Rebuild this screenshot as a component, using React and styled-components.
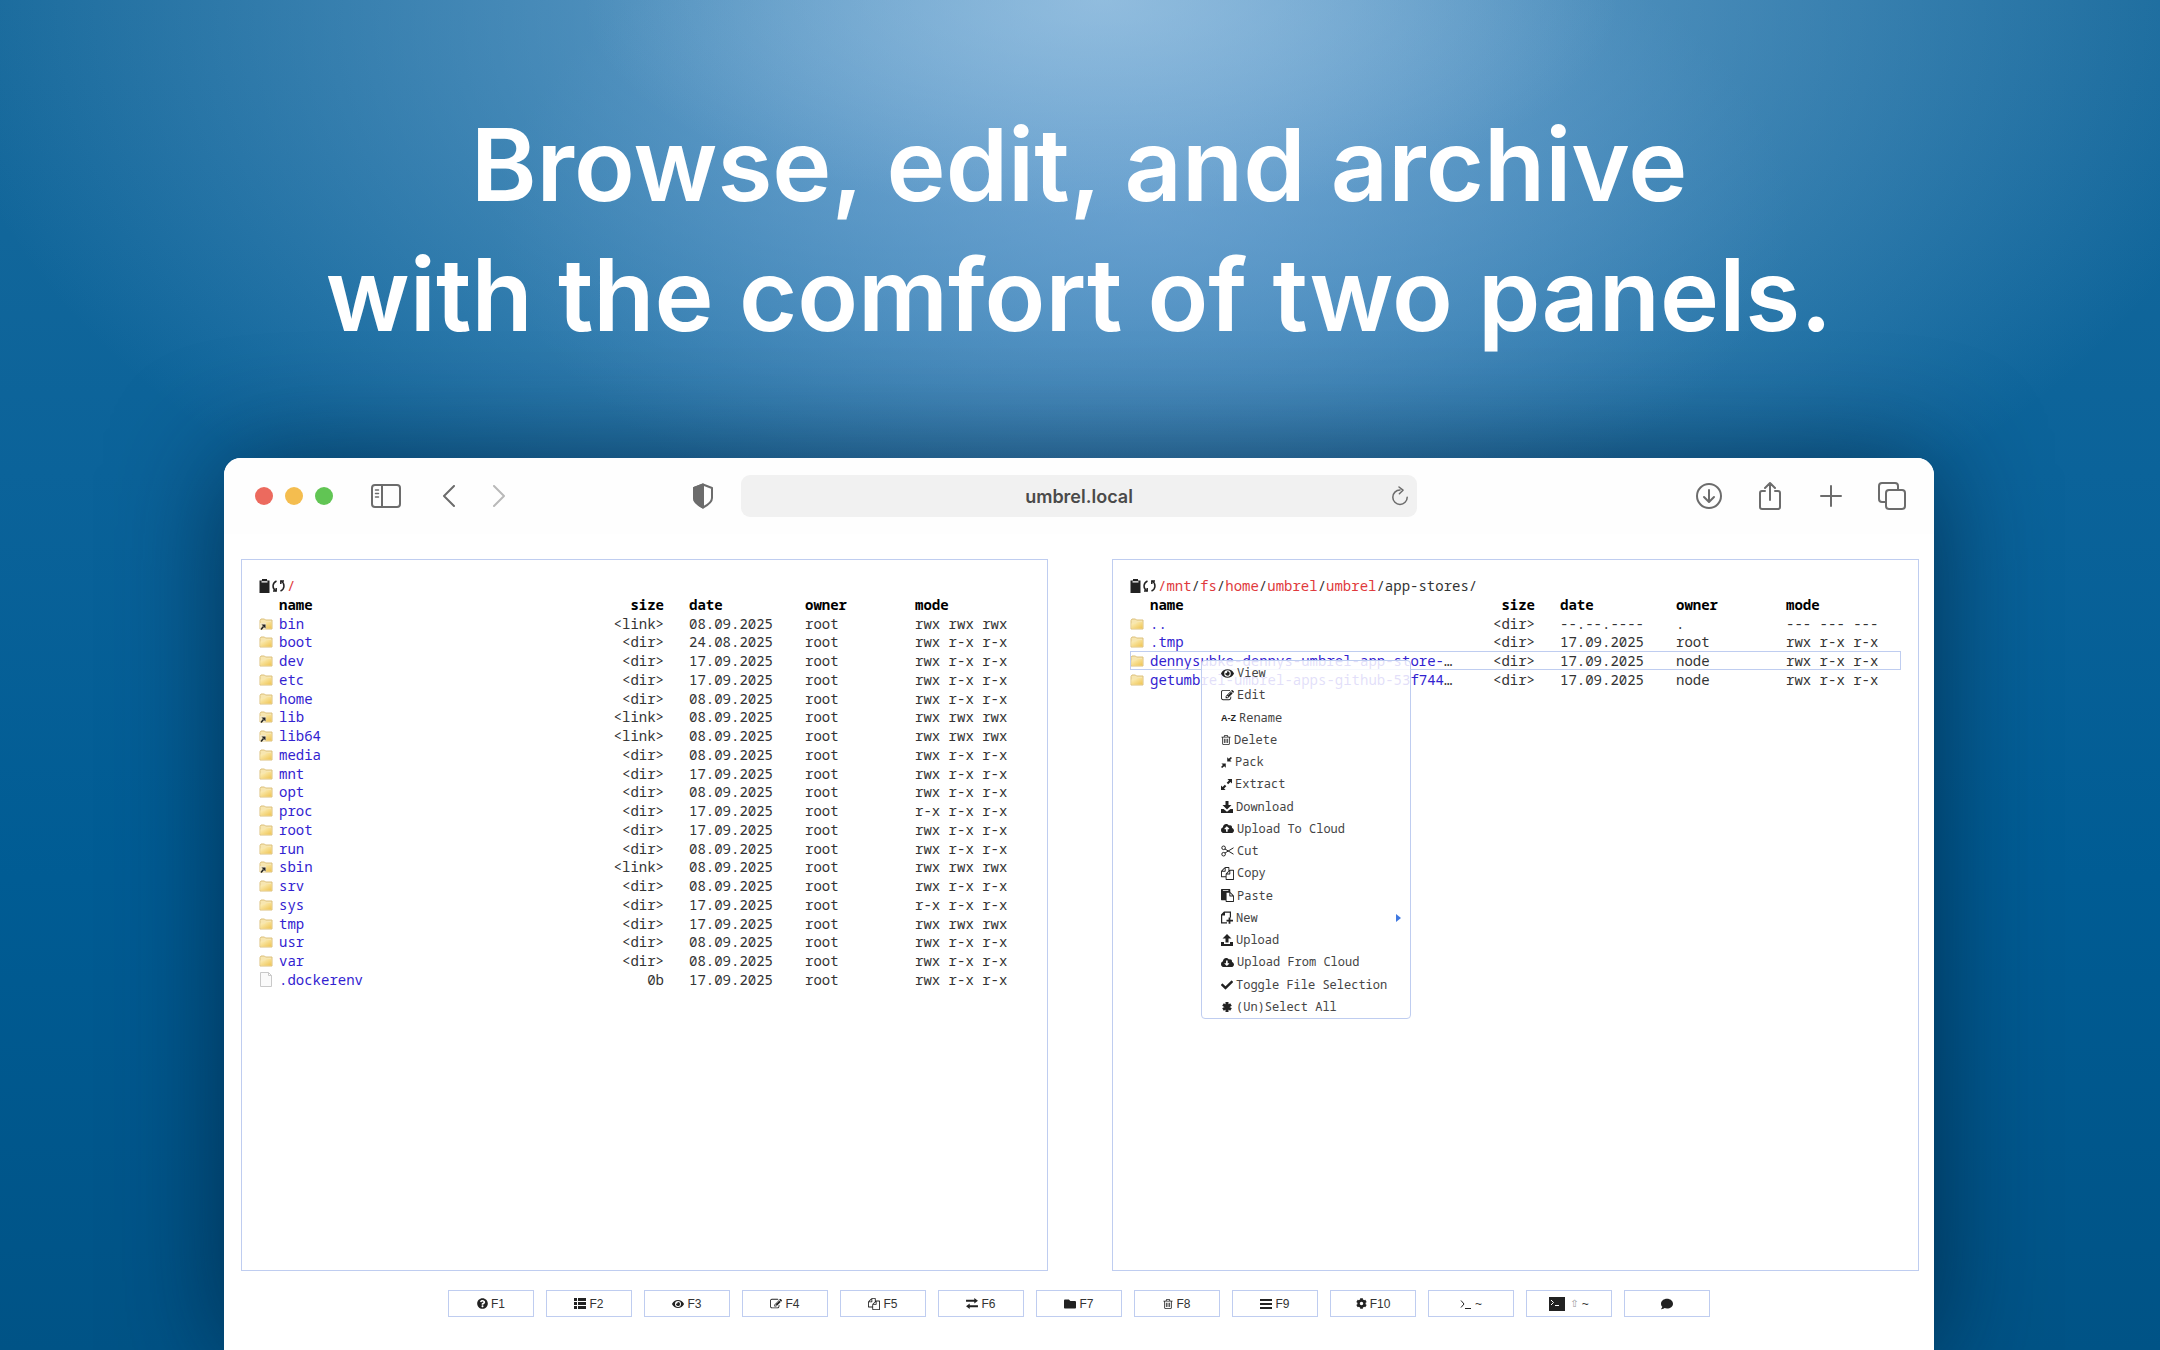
import React from "react";
import styled, { createGlobalStyle } from "styled-components";
import {
  FaEye, FaCloudUploadAlt, FaCloudDownloadAlt, FaCheck,
  FaQuestionCircle, FaFolder, FaCog, FaComment,
} from "react-icons/fa";

const MONO = `"Droid Sans Mono", "Noto Sans Mono", "DejaVu Sans Mono", monospace`;
const LINE = "#bfcdf0";

const GlobalStyle = createGlobalStyle`
  * { box-sizing: border-box; }
  body { margin: 0; background: #00568a; }
  button, input { font: inherit; color: inherit; }
  a { color: inherit; text-decoration: none; }
`;

const Page = styled.div`
  min-height: 100vh;
  display: flex;
  flex-direction: column;
  padding: 100px 226px 0 224px;
  overflow: hidden;
  background:
    radial-gradient(ellipse 24% 16% at 51% 0%, rgba(170, 205, 230, 0.5), rgba(150, 190, 225, 0) 100%),
    radial-gradient(ellipse 54% 50% at 51% 0%, rgba(140, 186, 226, 0.8), rgba(90, 150, 200, 0) 100%),
    radial-gradient(ellipse 30% 26% at 53% 16%, rgba(100, 155, 212, 0.5), rgba(70, 135, 195, 0) 100%),
    linear-gradient(180deg, #17699b 0%, #0b639a 35%, #005c94 65%, #005386 100%);
`;

const Headline = styled.h1`
  margin: 0 0 98px;
  font: 600 100px/130px Inter, sans-serif;
  color: #fff;
  text-align: center;
  white-space: nowrap;
`;

const Window = styled.section`
  flex: 1;
  display: flex;
  flex-direction: column;
  border-radius: 17px 17px 0 0;
  background: #fff;
  box-shadow: 0 4px 110px rgba(0, 26, 48, 0.66);
`;

const Toolbar = styled.header`
  display: grid;
  grid-template-columns: 1fr 676px 1fr;
  align-items: center;
  height: 76px;
  border-radius: 17px 17px 0 0;
  background: #fefefe;
`;

const ToolSide = styled.div`
  display: flex;
  align-items: center;
  justify-content: ${(p) => (p.$end ? "flex-end" : "flex-start")};
  gap: ${(p) => (p.$end ? "31px" : "0")};
  padding: ${(p) => (p.$end ? "0 27px 0 0" : "0 23px 0 31px")};
`;

const Lights = styled.div`
  display: flex;
  gap: 12px;
  margin-right: 38px;
`;

const Light = styled.button`
  width: 18px;
  height: 18px;
  padding: 0;
  border: 0;
  border-radius: 50%;
  background: ${(p) => p.$color};
`;

const ToolButton = styled.button`
  display: flex;
  align-items: center;
  justify-content: center;
  width: 30px;
  height: 32px;
  padding: 0;
  border: 0;
  background: none;
  color: ${(p) => (p.$dim ? "#b9b9b9" : "#6c6c6c")};
  margin-right: ${(p) => p.$after || "0"};
  margin-left: ${(p) => (p.$push ? "auto" : "0")};

  svg {
    flex: none;
    fill: none;
    stroke: currentColor;
    stroke-width: 2;
    stroke-linecap: round;
    stroke-linejoin: round;
  }
`;

const Address = styled.div`
  position: relative;

  input {
    display: block;
    width: 100%;
    height: 42px;
    padding: 0 40px;
    border: 0;
    border-radius: 9px;
    background: #f1f1f1;
    color: #4a4a4a;
    font: 600 18px Inter, sans-serif;
    text-align: center;
  }

  button {
    position: absolute;
    top: 5px;
    right: 2px;
  }
`;

const Panels = styled.main`
  flex: 1;
  display: flex;
  gap: 64px;
  padding: 25px 15px 0 17px;
`;

const Panel = styled.section`
  position: relative;
  flex: 1;
  min-width: 0;
  padding: 17px;
  border: 1px solid ${LINE};
  color: #333;
  font: 14px/18px ${MONO};
`;

const PathBar = styled.div`
  display: flex;
  align-items: center;
  height: 18px;
  white-space: pre;

  a { color: #e0393c; }
`;

const PathButton = styled.button`
  display: flex;
  padding: 0;
  border: 0;
  background: none;
  color: #222;
  margin-right: 2px;
`;

const Files = styled.table`
  width: 100%;
  table-layout: fixed;
  border-collapse: collapse;

  th, td {
    height: 19px;
    padding: 0;
    text-align: left;
    white-space: nowrap;
    line-height: 18px;
  }
  th { color: #000; font-weight: 700; }
  tbody tr:nth-child(4n + 2) td { height: 18px; }
  th:nth-child(3), td:nth-child(3) { padding-right: 25px; text-align: right; }
  a { color: #3222d0; }
`;

const Row = styled.tr`
  outline: ${(p) => (p.$current ? `1px solid ${LINE}` : "none")};
  outline-offset: -1px;
`;

const Col = styled.col`
  width: ${(p) => p.$w};
`;

const IconCell = styled.td`
  svg { display: block; }
`;

const Menu = styled.ul`
  position: absolute;
  left: 88px;
  top: 100px;
  width: 210px;
  min-height: 359px;
  margin: 0;
  padding: 1px 0 0;
  display: grid;
  grid-auto-rows: 1fr;
  list-style: none;
  border: 1px solid ${LINE};
  border-radius: 4px;
  background: rgba(255, 255, 255, 0.86);
  font-size: 12px;
`;

const MenuItem = styled.li`
  display: flex;

  button {
    flex: 1;
    display: flex;
    align-items: center;
    gap: 3px;
    padding: 0 9px 0 19px;
    border: 0;
    background: none;
    color: #444;
    white-space: nowrap;
  }
  svg { flex: none; color: #222; }
`;

const Letters = styled.span`
  width: 15px;
  color: #222;
  font: 700 9px "Liberation Sans", sans-serif;
`;

const Arrow = styled.span`
  margin-left: auto;
  border: solid transparent;
  border-width: 4px 0 4px 5px;
  border-left-color: #3f78e0;
`;

const Keys = styled.nav`
  display: flex;
  justify-content: center;
  gap: 12px;
  padding: 19px 0 33px;
`;

const Key = styled.button`
  display: flex;
  align-items: center;
  justify-content: center;
  gap: 3px;
  width: 86px;
  height: 27px;
  padding: 0;
  border: 1px solid ${LINE};
  background: #fff;
  color: #333;
  font: 12px "Liberation Sans", sans-serif;

  svg { color: #222; }
`;

const Shift = styled.span`
  margin-left: 2px;
  color: #9a9a9a;
  font: 10px "DejaVu Sans", sans-serif;
`;

const Glyph = ({ d, w = 13, h = 13, box = "0 0 1792 1792" }) => (
  <svg width={w} height={h} viewBox={box} fill="currentColor" aria-hidden="true"><path d={d} /></svg>
);

const PATHS = {
  edit: "M888 1184l116-116-152-152-116 116v56h96v96h56zm440-720q-16-16-33 1l-350 350q-17 17-1 33t33-1l350-350q17-17 1-33zm80 594v190q0 119-84.5 203.5t-203.5 84.5h-832q-119 0-203.5-84.5t-84.5-203.5v-832q0-119 84.5-203.5t203.5-84.5h832q63 0 117 25 15 7 18 23 3 17-9 29l-49 49q-14 14-32 8-23-6-45-6h-832q-66 0-113 47t-47 113v832q0 66 47 113t113 47h832q66 0 113-47t47-113v-126q0-13 9-22l64-64q15-15 35-7t20 29zm-96-738l288 288-672 672h-288v-288zm444 132l-92 92-288-288 92-92q28-28 68-28t68 28l152 152q28 28 28 68t-28 68z",
  copy: "M1696 384q40 0 68 28t28 68v1216q0 40-28 68t-68 28h-960q-40 0-68-28t-28-68v-288h-544q-40 0-68-28t-28-68v-672q0-40 20-88t48-76l408-408q28-28 76-48t88-20h416q40 0 68 28t28 68v328q68-40 128-40h416zm-544 213l-299 299h299v-299zm-640-384l-299 299h299v-299zm196 647l316-316v-416h-384v416q0 40-28 68t-68 28h-416v640h512v-256q0-40 20-88t48-76zm956 804v-1152h-384v416q0 40-28 68t-68 28h-416v640h896z",
  paste: "M768 1664h896v-640h-416q-40 0-68-28t-28-68v-416h-384v1152zm256-1440v-64q0-13-9.5-22.5t-22.5-9.5h-704q-13 0-22.5 9.5t-9.5 22.5v64q0 13 9.5 22.5t22.5 9.5h704q13 0 22.5-9.5t9.5-22.5zm256 672h299l-299-299v299zm512 128v672q0 40-28 68t-68 28h-960q-40 0-68-28t-28-68v-160h-544q-40 0-68-28t-28-68v-1344q0-40 28-68t68-28h1088q40 0 68 28t28 68v328q21 13 36 28l408 408q28 28 48 76t20 88z",
  trash: "M704 736v576q0 14-9 23t-23 9h-64q-14 0-23-9t-9-23v-576q0-14 9-23t23-9h64q14 0 23 9t9 23zm256 0v576q0 14-9 23t-23 9h-64q-14 0-23-9t-9-23v-576q0-14 9-23t23-9h64q14 0 23 9t9 23zm256 0v576q0 14-9 23t-23 9h-64q-14 0-23-9t-9-23v-576q0-14 9-23t23-9h64q14 0 23 9t9 23zm128 724v-948h-896v948q0 22 7 40.5t14.5 27 10.5 8.5h832q3 0 10.5-8.5t14.5-27 7-40.5zm-672-1076h448l-48-117q-7-9-17-11h-317q-10 2-17 11zm928 32v64q0 14-9 23t-23 9h-96v948q0 83-47 143.5t-113 60.5h-832q-66 0-113-58.5t-47-141.5v-952h-96q-14 0-23-9t-9-23v-64q0-14 9-23t23-9h309l70-167q15-37 54-63t79-26h320q40 0 79 26t54 63l70 167h309q14 0 23 9t9 23z",
  download: "M4.500 0h3v4h3L6 8.500 1.500 4h3zM0 8h2.600L6 10.800 9.400 8H12v4H0z",
  upload: "M4.500 8.500h3v-4h3L6 0 1.500 4.500h3zM0 8h3v2h6V8h3v4H0z",
  list: "M0 0h3v3H0zM4 0h8v3H4zM0 4h3v3H0zM4 4h8v3H4zM0 8h3v3H0zM4 8h8v3H4z",
  lines: "M0 0h12v2H0zM0 4h12v2H0zM0 8h12v2H0z",
  swap: "M0 2h9V0l4 3-4 3V4H0zM13 8H4V6L0 9l4 3v-2h9z",
  newFile: "M3 0h7v6H8.800V1.200H4V4H1.200v6.800H6V12H0V3zM7.600 6h1.800v2.200H12v1.800H9.400v2.200H7.600V10H5.500V8.200h2.100z",
  clipboard: "M0 1.500h2.500V0h5v1.500H10V14H0zM2 2.200v1.300h6V2.200z",
  shrink: "M12 1.200L9.900 3.300l1.600 1.600H6.800V.3l1.700 1.600L10.700 0zM0 10.800l2.100-2.100L.5 7.100h4.700v4.600l-1.700-1.600L1.300 12z",
  grow: "M12 0v5l-1.700-1.700-2.500 2.500-1.600-1.600 2.500-2.500L7 0zM0 12V7l1.700 1.700 2.500-2.500 1.600 1.600-2.500 2.500L5 12z",
};

const EditIcon = () => <Glyph d={PATHS.edit} />;
const CopyIcon = () => <Glyph d={PATHS.copy} />;
const PasteIcon = () => <Glyph d={PATHS.paste} />;
const TrashIcon = () => <Glyph d={PATHS.trash} w={10} h={12} box="128 0 1536 1792" />;
const DownloadIcon = () => <Glyph d={PATHS.download} w={12} h={12} box="0 0 12 12" />;
const UploadIcon = () => <Glyph d={PATHS.upload} w={12} h={12} box="0 0 12 12" />;
const NewIcon = () => <Glyph d={PATHS.newFile} w={12} h={13} box="0 0 12 12" />;
const ShrinkIcon = () => <Glyph d={PATHS.shrink} w={11} h={11} box="0 0 12 12" />;
const GrowIcon = () => <Glyph d={PATHS.grow} w={11} h={11} box="0 0 12 12" />;

const StarIcon = () => (
  <svg width="12" height="12" viewBox="0 0 12 12" stroke="currentColor" strokeWidth="3" aria-hidden="true">
    <path d="M6 1v10M2 3.500l8 5M10 3.500l-8 5" />
  </svg>
);

const CutIcon = () => (
  <svg width="13" height="12" viewBox="0 0 13 12" fill="none" stroke="currentColor" aria-hidden="true">
    <circle cx="2.600" cy="2.800" r="1.800" />
    <circle cx="2.600" cy="9.200" r="1.800" />
    <path d="M4 4l8.500 5.200M4 8l8.500-5.200" />
  </svg>
);

const ReloadIcon = () => (
  <svg width="13" height="14" viewBox="0 0 13 14" fill="none" stroke="currentColor" strokeWidth="1.500" aria-hidden="true">
    <path d="M4.500 2C0 4 0 9.500 3.800 11.800M8.500 12C13 10 13 4.500 9.200 2.200" />
    <path d="M1 12h3.200V9M12 2H8.800v3" />
  </svg>
);

const FolderIcon = ({ link }) => (
  <svg width="14" height="12" viewBox="0 0 14 12" aria-hidden="true">
    <defs>
      <linearGradient id="folder" x1="0" y1="0" x2="1" y2="1">
        <stop offset="0" stopColor="#fdf3c4" />
        <stop offset="1" stopColor="#efc452" />
      </linearGradient>
    </defs>
    <path d="M1 2.500L2 1h3.500l1 1H13v9H1z" fill="#f7e6b0" stroke="#dcc07c" />
    <path d="M1.500 5.500H6l1-1.500h5.500v6.500h-11z" fill="url(#folder)" />
    {link && (
      <g>
        <path d="M1 5h6v7H1z" fill="#f3e7c4" />
        <path d="M2 11.500l2.500-3" stroke="#222" strokeWidth="1.500" />
        <path d="M2.500 6.500H6.500v4z" fill="#222" />
      </g>
    )}
  </svg>
);

const FileIcon = () => (
  <svg width="14" height="15" viewBox="0 0 14 15" fill="#fafafa" stroke="#c9c9c9" aria-hidden="true">
    <path d="M1.500 .5h8l3 3v11h-11zM9.500 .5v3h3" />
  </svg>
);

const Crumbs = ({ parts, current }) => (
  <PathBar>
    <PathButton type="button" aria-label="Copy path">
      <Glyph d={PATHS.clipboard} w={11} h={14} box="0 0 10 14" />
    </PathButton>
    <PathButton type="button" aria-label="Reload"><ReloadIcon /></PathButton>
    <a href="#root">/{parts[0]}</a>
    {parts.slice(1).map((part, i) => (
      <React.Fragment key={i}>/<a href={`#${part}`}>{part}</a></React.Fragment>
    ))}
    {current && `/${current}/`}
  </PathBar>
);

const FileTable = ({ rows, current }) => (
  <Files>
    <colgroup>
      <Col $w="20px" /><Col $w="auto" /><Col $w="100px" /><Col $w="116px" /><Col $w="110px" /><Col $w="115px" />
    </colgroup>
    <thead>
      <tr><th aria-label="type" /><th>name</th><th>size</th><th>date</th><th>owner</th><th>mode</th></tr>
    </thead>
    <tbody>
      {rows.map(([name, size, date, owner, mode, cut]) => (
        <Row key={name} $current={name === current}>
          <IconCell>{size === "0b" ? <FileIcon /> : <FolderIcon link={size === "<link>"} />}</IconCell>
          <td><a href={`#${name}`}>{name}</a>{cut && "…"}</td>
          <td>{size}</td>
          <td>{date}</td>
          <td>{owner}</td>
          <td>{mode}</td>
        </Row>
      ))}
    </tbody>
  </Files>
);

const SEP8 = "08.09.2025";
const SEP17 = "17.09.2025";
const FULL = "rwx rwx rwx";
const STD = "rwx r-x r-x";
const READ = "r-x r-x r-x";

const ROOT_FILES = [
  ["bin", "<link>", SEP8, "root", FULL],
  ["boot", "<dir>", "24.08.2025", "root", STD],
  ["dev", "<dir>", SEP17, "root", STD],
  ["etc", "<dir>", SEP17, "root", STD],
  ["home", "<dir>", SEP8, "root", STD],
  ["lib", "<link>", SEP8, "root", FULL],
  ["lib64", "<link>", SEP8, "root", FULL],
  ["media", "<dir>", SEP8, "root", STD],
  ["mnt", "<dir>", SEP17, "root", STD],
  ["opt", "<dir>", SEP8, "root", STD],
  ["proc", "<dir>", SEP17, "root", READ],
  ["root", "<dir>", SEP17, "root", STD],
  ["run", "<dir>", SEP8, "root", STD],
  ["sbin", "<link>", SEP8, "root", FULL],
  ["srv", "<dir>", SEP8, "root", STD],
  ["sys", "<dir>", SEP17, "root", READ],
  ["tmp", "<dir>", SEP17, "root", FULL],
  ["usr", "<dir>", SEP8, "root", STD],
  ["var", "<dir>", SEP8, "root", STD],
  [".dockerenv", "0b", SEP17, "root", STD],
];

const STORE_FILES = [
  ["..", "<dir>", "--.--.----", ".", "--- --- ---"],
  [".tmp", "<dir>", SEP17, "root", STD],
  ["dennysubke-dennys-umbrel-app-store-", "<dir>", SEP17, "node", STD, true],
  ["getumbrel-umbrel-apps-github-53f744", "<dir>", SEP17, "node", STD, true],
];

const MENU = [
  ["View", <FaEye size={13} />],
  ["Edit", <EditIcon />],
  ["Rename", <Letters aria-hidden="true">A-Z</Letters>],
  ["Delete", <TrashIcon />],
  ["Pack", <ShrinkIcon />],
  ["Extract", <GrowIcon />],
  ["Download", <DownloadIcon />],
  ["Upload To Cloud", <FaCloudUploadAlt size={13} />],
  ["Cut", <CutIcon />],
  ["Copy", <CopyIcon />],
  ["Paste", <PasteIcon />],
  ["New", <NewIcon />],
  ["Upload", <UploadIcon />],
  ["Upload From Cloud", <FaCloudDownloadAlt size={13} />],
  ["Toggle File Selection", <FaCheck size={12} />],
  ["(Un)Select All", <StarIcon />],
];

const KEYS = [
  ["F1", <FaQuestionCircle size={11} />],
  ["F2", <Glyph d={PATHS.list} w={12} h={11} box="0 0 12 11" />],
  ["F3", <FaEye size={12} />],
  ["F4", <Glyph d={PATHS.edit} w={12} h={12} />],
  ["F5", <Glyph d={PATHS.copy} w={12} h={12} />],
  ["F6", <Glyph d={PATHS.swap} w={12} h={11} box="0 0 13 12" />],
  ["F7", <FaFolder size={12} />],
  ["F8", <Glyph d={PATHS.trash} w={10} h={12} box="128 0 1536 1792" />],
  ["F9", <Glyph d={PATHS.lines} w={12} h={10} box="0 0 12 10" />],
  ["F10", <FaCog size={11} />],
];

const PromptIcon = () => (
  <svg width="12" height="12" viewBox="0 0 12 12" fill="none" stroke="currentColor" aria-hidden="true">
    <path d="M1 2.500l3 3.500-3 3.500M5 10.500h6" />
  </svg>
);

const TerminalIcon = () => (
  <svg width="16" height="14" viewBox="0 0 16 14" aria-hidden="true">
    <path d="M0 0h16v14H0z" fill="#222" />
    <path d="M2 3l2.500 2.500L2 8M6 8.500h4" fill="none" stroke="#fff" />
  </svg>
);

export default function App() {
  return (
    <>
      <GlobalStyle />
      <Page>
        <Headline>
          Browse, edit, and archive
          <br />
          with the comfort of two panels.
        </Headline>
        <Window>
          <Toolbar>
            <ToolSide>
              <Lights>
                <Light type="button" aria-label="Close" $color="#ec6a5e" />
                <Light type="button" aria-label="Minimise" $color="#f4bd4f" />
                <Light type="button" aria-label="Zoom" $color="#61c554" />
              </Lights>
              <ToolButton type="button" aria-label="Sidebar" $after="33px">
                <svg width="30" height="24" viewBox="0 0 30 24">
                  <rect x="1" y="1" width="28" height="22" rx="3" />
                  <path d="M11 1v22" />
                  <path d="M4.500 6h3M4.500 9.500h3M4.500 13h3" strokeWidth="1.500" />
                </svg>
              </ToolButton>
              <ToolButton type="button" aria-label="Back" $after="20px">
                <svg width="14" height="22" viewBox="0 0 14 22"><path d="M12 1L2 11l10 10" /></svg>
              </ToolButton>
              <ToolButton type="button" aria-label="Forward" $dim>
                <svg width="14" height="22" viewBox="0 0 14 22"><path d="M2 1l10 10L2 21" /></svg>
              </ToolButton>
              <ToolButton type="button" aria-label="Privacy report" $push>
                <svg width="22" height="26" viewBox="0 0 22 26">
                  <path d="M11 1.500l9 3.500v10c0 4-4 7-9 9.500C6 22 2 19 2 15V5z" />
                  <path d="M11 1.500V24.500C6 22 2 19 2 15V5z" fill="currentColor" />
                </svg>
              </ToolButton>
            </ToolSide>
            <Address>
              <input type="text" aria-label="Address" defaultValue="umbrel.local" />
              <ToolButton type="button" aria-label="Reload page">
                <svg width="18" height="20" viewBox="0 0 18 20">
                  <path d="M9 4a7.200 7.200 0 1 0 7.200 7.200M8 1l4 3.200-3.600 3.600" strokeWidth="1.500" />
                </svg>
              </ToolButton>
            </Address>
            <ToolSide $end>
              <ToolButton type="button" aria-label="Downloads">
                <svg width="26" height="26" viewBox="0 0 26 26">
                  <circle cx="13" cy="13" r="12" />
                  <path d="M13 7v11M8 14l5 5 5-5" />
                </svg>
              </ToolButton>
              <ToolButton type="button" aria-label="Share">
                <svg width="24" height="30" viewBox="0 0 24 30">
                  <path d="M7 10H4a2 2 0 0 0-2 2v14a2 2 0 0 0 2 2h16a2 2 0 0 0 2-2V12a2 2 0 0 0-2-2h-3M12 19V2M7 7l5-5 5 5" />
                </svg>
              </ToolButton>
              <ToolButton type="button" aria-label="New tab">
                <svg width="22" height="22" viewBox="0 0 22 22"><path d="M11 1v20M1 11h20" /></svg>
              </ToolButton>
              <ToolButton type="button" aria-label="Tab overview">
                <svg width="28" height="28" viewBox="0 0 28 28">
                  <rect x="8" y="8" width="19" height="19" rx="3" />
                  <path d="M8 20H4a3 3 0 0 1-3-3V4a3 3 0 0 1 3-3h13a3 3 0 0 1 3 3v4" />
                </svg>
              </ToolButton>
            </ToolSide>
          </Toolbar>
          <Panels>
            <Panel aria-label="Left panel">
              <Crumbs parts={[""]} />
              <FileTable rows={ROOT_FILES} />
            </Panel>
            <Panel aria-label="Right panel">
              <Crumbs parts={["mnt", "fs", "home", "umbrel", "umbrel"]} current="app-stores" />
              <FileTable rows={STORE_FILES} current="dennysubke-dennys-umbrel-app-store-" />
              <Menu>
                {MENU.map(([label, icon]) => (
                  <MenuItem key={label}>
                    <button type="button">{icon}{label}{label === "New" && <Arrow />}</button>
                  </MenuItem>
                ))}
              </Menu>
            </Panel>
          </Panels>
          <Keys aria-label="Commands">
            {KEYS.map(([label, icon]) => (
              <Key key={label} type="button">{icon}{label}</Key>
            ))}
            <Key type="button"><PromptIcon />~</Key>
            <Key type="button"><TerminalIcon /><Shift>⇧</Shift>~</Key>
            <Key type="button" aria-label="Contact"><FaComment size={12} /></Key>
          </Keys>
        </Window>
      </Page>
    </>
  );
}
